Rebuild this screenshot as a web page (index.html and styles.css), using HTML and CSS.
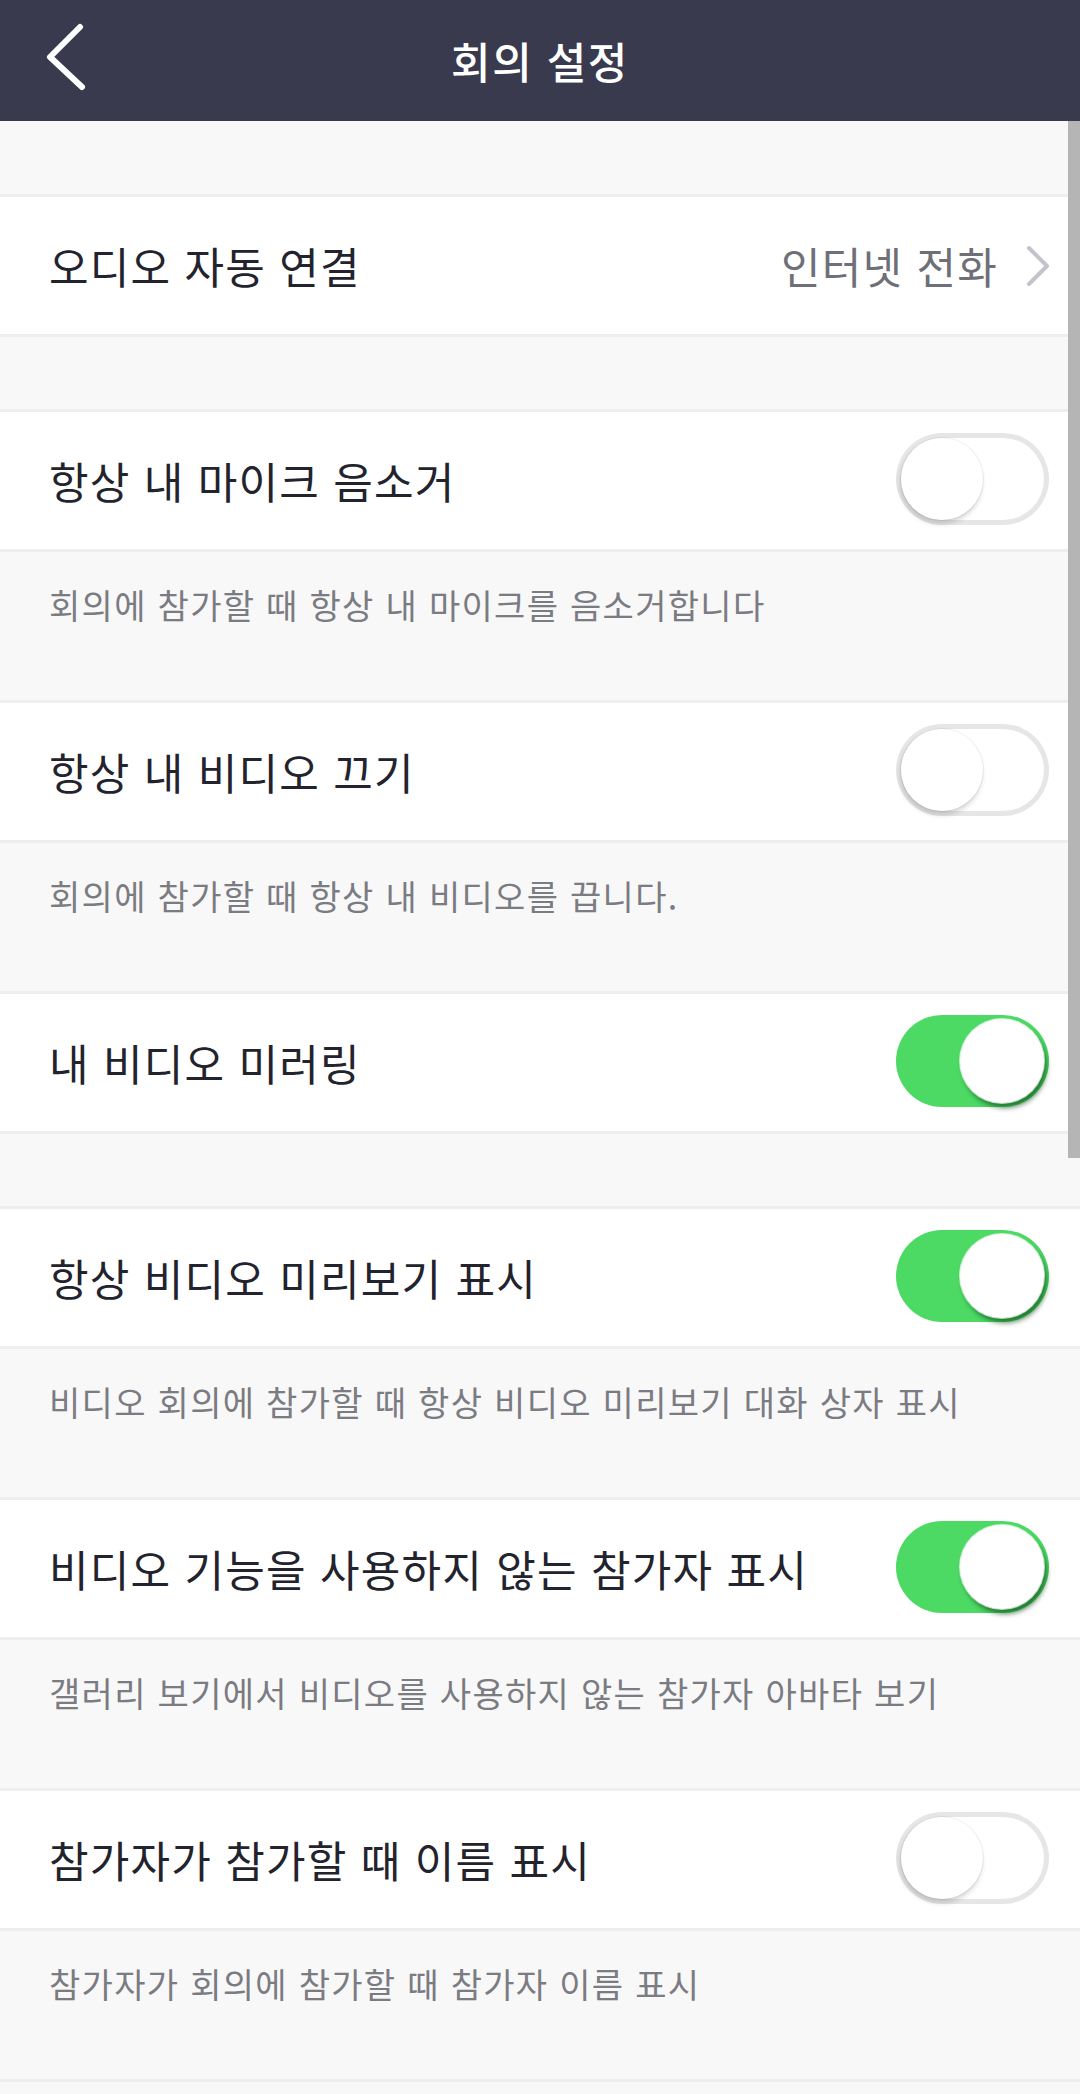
FILE: index.html
```html
<!DOCTYPE html>
<html lang="ko">
<head>
    <meta charset="UTF-8">
    <title>회의 설정</title>
    <link rel="stylesheet" href="styles.css">
</head>
<body>
    <div class="page">
        <div class="topbar">
            <span class="back">
                <svg width="44" height="70" viewBox="0 0 44 70">
                    <polyline points="36,5 6,35 38,65" fill="none" stroke="#fff" stroke-width="6" stroke-linecap="round" stroke-linejoin="round"/>
                </svg>
            </span>
            <h1 class="title">회의 설정</h1>
        </div>

        <div class="gap first"></div>
        <div class="row">
            <span class="label">오디오 자동 연결</span>
            <span class="value">
                인터넷 전화
                <svg width="26" height="42" viewBox="0 0 26 42">
                    <polyline points="4,3 22,21 4,39" fill="none" stroke="#c3c3cd" stroke-width="4" stroke-linecap="round" stroke-linejoin="round"/>
                </svg>
            </span>
        </div>

        <div class="gap"></div>
        <div class="row">
            <span class="label">항상 내 마이크 음소거</span>
            <span class="switch"><i></i></span>
        </div>
        <p class="note">회의에 참가할 때 항상 내 마이크를 음소거합니다</p>

        <div class="row">
            <span class="label">항상 내 비디오 끄기</span>
            <span class="switch"><i></i></span>
        </div>
        <p class="note">회의에 참가할 때 항상 내 비디오를 끕니다.</p>

        <div class="row">
            <span class="label">내 비디오 미러링</span>
            <span class="switch on"><i></i></span>
        </div>

        <div class="gap"></div>
        <div class="row">
            <span class="label">항상 비디오 미리보기 표시</span>
            <span class="switch on"><i></i></span>
        </div>
        <p class="note">비디오 회의에 참가할 때 항상 비디오 미리보기 대화 상자 표시</p>

        <div class="row">
            <span class="label">비디오 기능을 사용하지 않는 참가자 표시</span>
            <span class="switch on"><i></i></span>
        </div>
        <p class="note">갤러리 보기에서 비디오를 사용하지 않는 참가자 아바타 보기</p>

        <div class="row">
            <span class="label">참가자가 참가할 때 이름 표시</span>
            <span class="switch"><i></i></span>
        </div>
        <p class="note">참가자가 회의에 참가할 때 참가자 이름 표시</p>
        <div class="rule"></div>

        <div class="scrollbar"></div>
    </div>
</body>
</html>
```

FILE: styles.css
```css
* {
    padding: 0;
    margin: 0;
    box-sizing: border-box;
}
body {
    background: #f8f8f9;
    font-family: "Noto Sans CJK KR", "Noto Sans", sans-serif;
    color: #23232e;
}
.page {
    position: relative;
    width: 1080px;
    min-height: 2094px;
    overflow: hidden;
}
.topbar {
    height: 121px;
    background: #393a4e;
    display: flex;
    align-items: center;
    justify-content: center;
    position: relative;
}
.back {
    position: absolute;
    left: 44px;
    top: 22px;
    display: flex;
}
.title {
    font-size: 43px;
    font-weight: 500;
    color: #fff;
    line-height: 1;
    letter-spacing: 1.5px;
}
.gap {
    height: 72px;
}
.gap.first {
    height: 73px;
}
.row {
    height: 143px;
    background: #fff;
    border-top: 3px solid #eeeef1;
    border-bottom: 3px solid #eeeef1;
    display: flex;
    align-items: center;
    justify-content: space-between;
    padding: 0 31px 0 49px;
}
.label {
    font-size: 43px;
    line-height: 1;
    letter-spacing: 1.2px;
}
.value {
    display: flex;
    align-items: center;
    gap: 27px;
    font-size: 43px;
    line-height: 1;
    letter-spacing: 1.2px;
    color: #6f6f77;
    margin-right: -2px;
}
.note {
    font-size: 34px;
    line-height: 44px;
    color: #7b7b82;
    padding: 31px 0 73px 49px;
    height: 148px;
    letter-spacing: 1.3px;
}
.rule {
    height: 3px;
    background: #eeeef1;
}
.switch {
    width: 153px;
    height: 92px;
    border-radius: 46px;
    background: #fff;
    box-shadow: inset 0 0 0 5px #e6e6e6;
    display: flex;
    align-items: center;
    padding: 0 5px;
    margin-top: -4px;
}
.switch i {
    width: 82px;
    height: 82px;
    border-radius: 50%;
    background: #fff;
    box-shadow: 0 0 0 1px rgba(0, 0, 0, 0.06), -1px 4px 5px rgba(0, 0, 0, 0.16);
}
.switch.on {
    background: #4cd964;
    box-shadow: none;
    justify-content: flex-end;
}
.switch.on i {
    width: 84px;
    height: 84px;
    box-shadow: 0 0 0 1px rgba(255, 255, 255, 0.7), 3px 5px 5px rgba(10, 70, 20, 0.65);
}
.scrollbar {
    position: absolute;
    top: 121px;
    right: 0;
    width: 12px;
    height: 1037px;
    background: #b5b5b5;
}
```
